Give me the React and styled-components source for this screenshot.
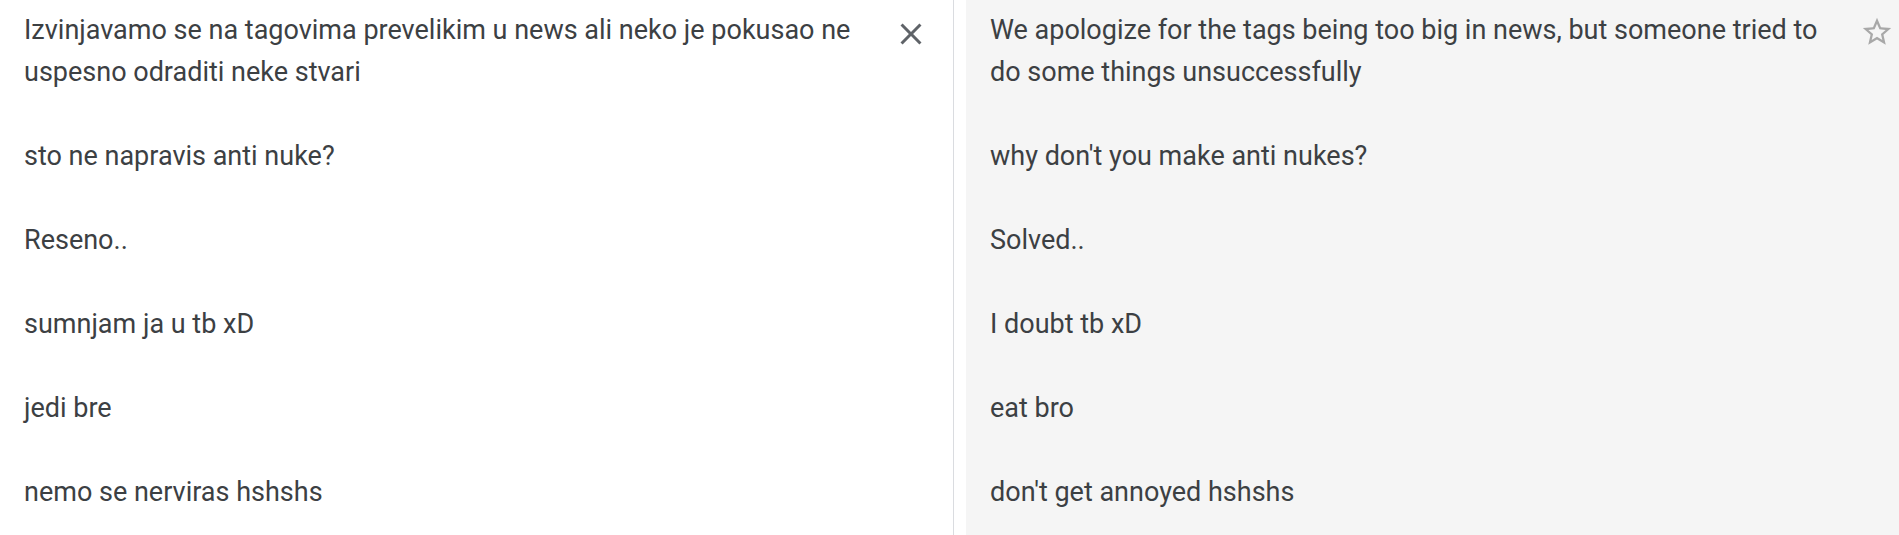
import React from "react";
import styled, { createGlobalStyle } from "styled-components";

const GlobalStyle = createGlobalStyle`
    html, body {
        margin: 0;
        padding: 0;
        background: #ffffff;
        font-family: Roboto, "Liberation Sans", Arial, sans-serif;
    }
`;

const Page = styled.div`
    display: flex;
    height: 535px;
    overflow: hidden;
`;

const SourcePanel = styled.div`
    display: flex;
    width: 953px;
    flex-shrink: 0;
    border-right: 1px solid #dadce0;
    background: #ffffff;
`;

const Gap = styled.div`
    width: 12px;
    flex-shrink: 0;
    background: #ffffff;
`;

const TargetPanel = styled.div`
    display: flex;
    flex: 1;
    background: #f5f5f5;
`;

const Text = styled.div`
    flex: 1;
    padding: 9px 16px 0 24px;
    color: #3c4043;
    font-size: 27px;
    line-height: 42px;
`;

const Paragraph = styled.p`
    margin: 0 0 42px;
`;

const IconButton = styled.button`
    display: flex;
    align-items: center;
    justify-content: center;
    width: ${(p) => p.size}px;
    height: ${(p) => p.size}px;
    margin: ${(p) => p.margin};
    padding: 0;
    border: none;
    background: transparent;
    cursor: pointer;
    flex-shrink: 0;
`;

const CloseIcon = () => (
    <svg width="36" height="36" viewBox="0 0 24 24">
        <path
            fill="#5f6368"
            d="M19 6.41L17.59 5 12 10.59 6.41 5 5 6.41 10.59 12 5 17.59 6.41 19 12 13.41 17.59 19 19 17.59 13.41 12z"
        />
    </svg>
);

const StarIcon = () => (
    <svg width="34" height="34" viewBox="0 0 24 24">
        <path
            fill="#a8a8a8"
            d="M22 9.24l-7.19-.62L12 2 9.19 8.63 2 9.24l5.46 4.73L5.82 21 12 17.27 18.18 21l-1.63-7.03L22 9.24zM12 15.4l-3.76 2.27 1-4.28-3.32-2.88 4.38-.38L12 6.1l1.71 4.04 4.38.38-3.32 2.88 1 4.28L12 15.4z"
        />
    </svg>
);

const source = [
    "Izvinjavamo se na tagovima prevelikim u news ali neko je pokusao ne uspesno odraditi neke stvari",
    "sto ne napravis anti nuke?",
    "Reseno..",
    "sumnjam ja u tb xD",
    "jedi bre",
    "nemo se nerviras hshshs",
];

const target = [
    "We apologize for the tags being too big in news, but someone tried to do some things unsuccessfully",
    "why don't you make anti nukes?",
    "Solved..",
    "I doubt tb xD",
    "eat bro",
    "don't get annoyed hshshs",
];

const App = () => (
    <>
        <GlobalStyle />
        <Page>
            <SourcePanel>
                <Text>
                    {source.map((line, i) => (
                        <Paragraph key={i}>{line}</Paragraph>
                    ))}
                </Text>
                <IconButton size={48} margin="10px 18px 0 0" aria-label="Clear">
                    <CloseIcon />
                </IconButton>
            </SourcePanel>
            <Gap />
            <TargetPanel>
                <Text>
                    {target.map((line, i) => (
                        <Paragraph key={i}>{line}</Paragraph>
                    ))}
                </Text>
                <IconButton size={40} margin="12px 2px 0 0" aria-label="Save">
                    <StarIcon />
                </IconButton>
            </TargetPanel>
        </Page>
    </>
);

export default App;
